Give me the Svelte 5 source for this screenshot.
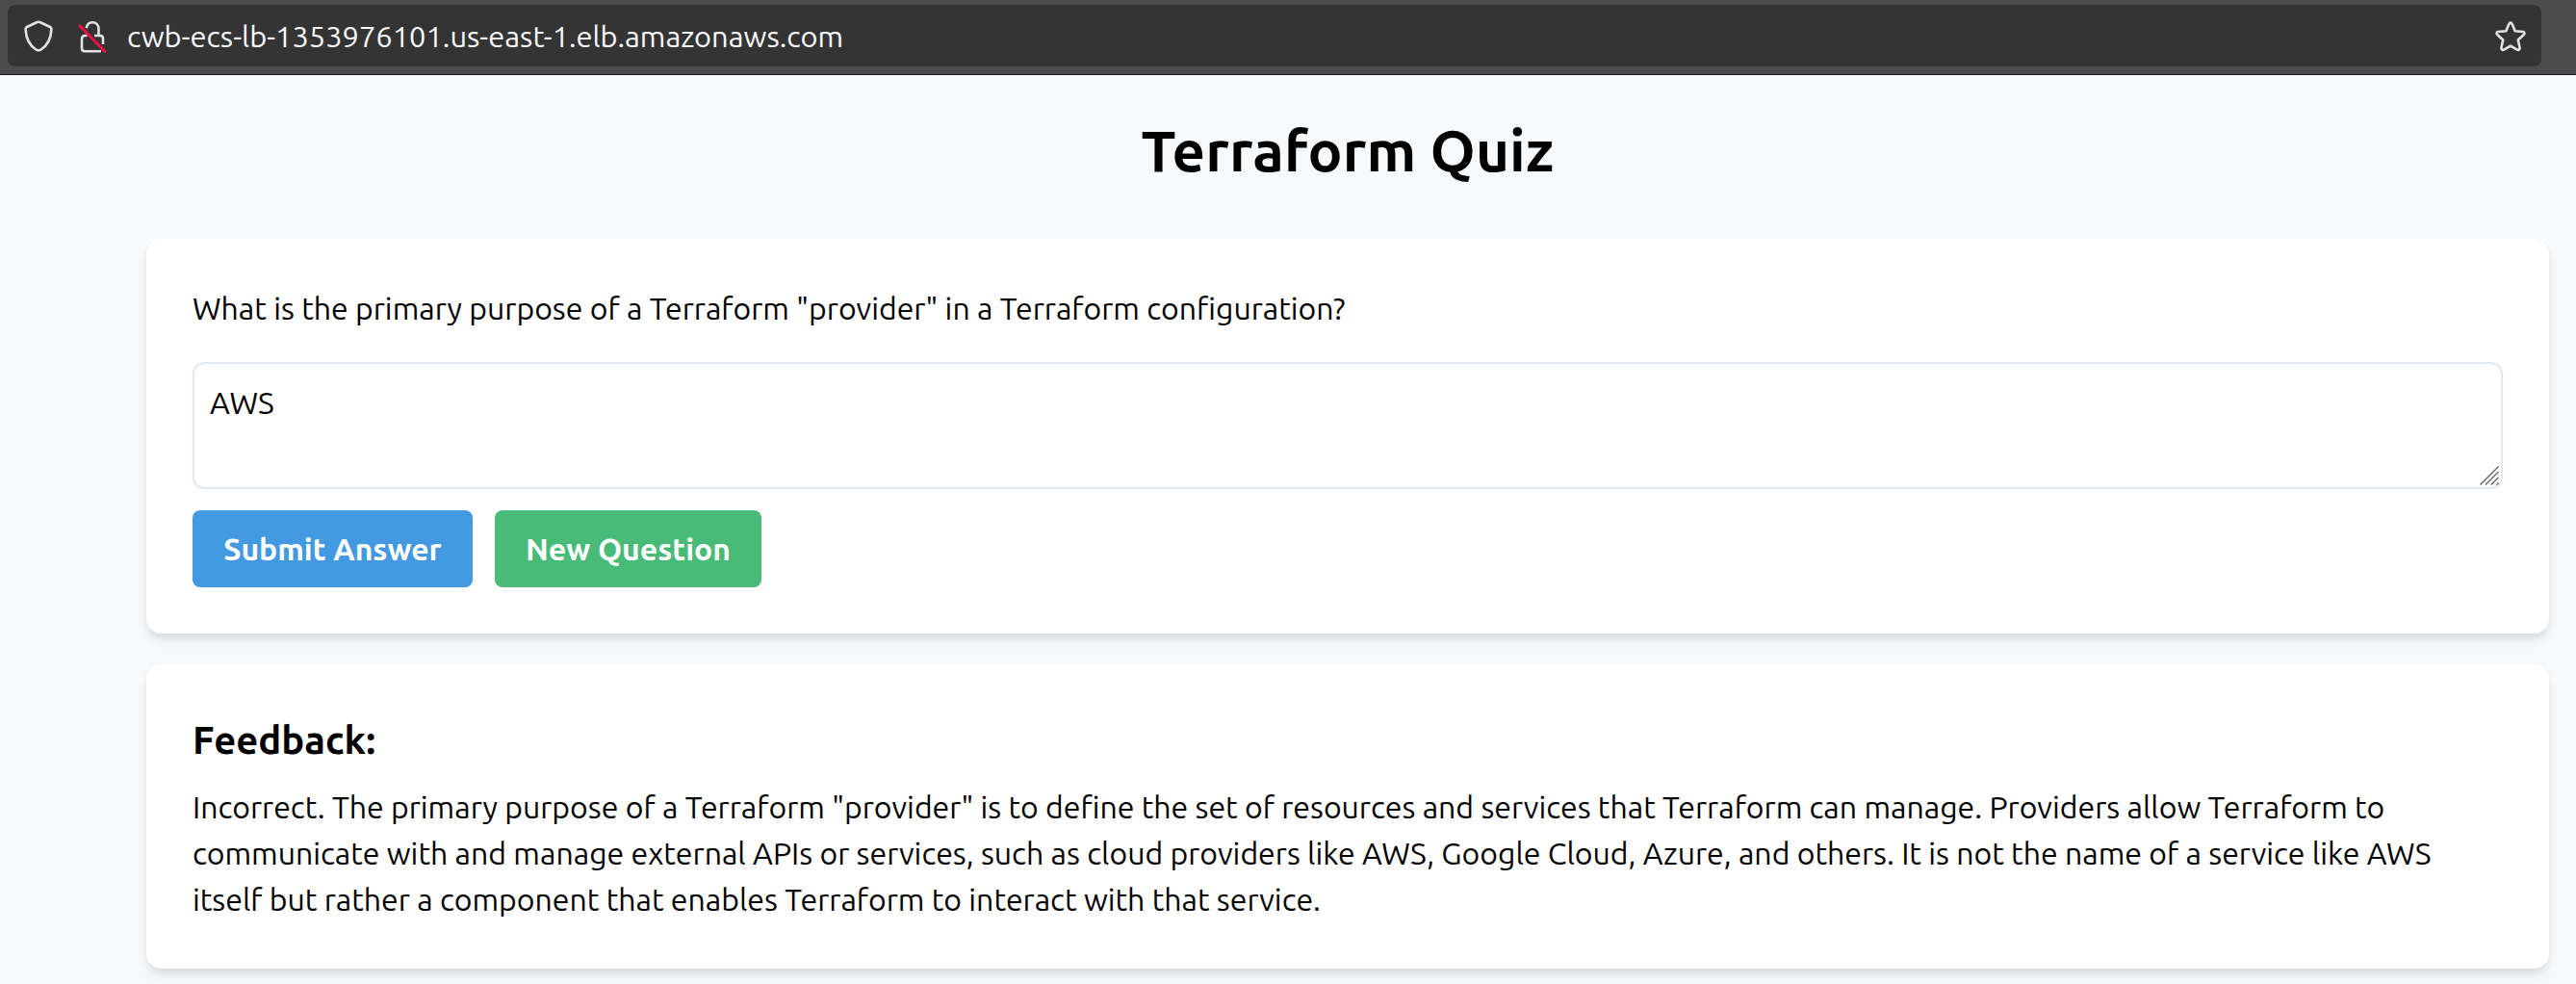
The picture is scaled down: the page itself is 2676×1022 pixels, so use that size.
<script>
  let answer = $state('AWS');
  const url = 'cwb-ecs-lb-1353976101.us-east-1.elb.amazonaws.com';
  const question = 'What is the primary purpose of a Terraform "provider" in a Terraform configuration?';
  const feedback =
    'Incorrect. The primary purpose of a Terraform "provider" is to define the set of resources and services that Terraform can manage. Providers allow Terraform to communicate with and manage external APIs or services, such as cloud providers like AWS, Google Cloud, Azure, and others. It is not the name of a service like AWS itself but rather a component that enables Terraform to interact with that service.';
</script>

<header class="toolbar">
  <div class="urlbar">
    <svg class="shield" viewBox="0 0 32 36" width="32" height="36">
      <path d="M16 3.7 Q17 3.7 18 4.3 L28 9 Q29.6 9.8 29.4 11.6 C29 21 26.4 27.2 18.6 32.5 Q16 34.3 13.4 32.5 C5.6 27.2 3 21 2.6 11.6 Q2.4 9.8 4 9 L14 4.3 Q15 3.7 16 3.7 Z" />
    </svg>
    <svg class="lock" viewBox="0 0 32 36" width="32" height="36">
      <path d="M9.7 10.2 C10.4 6 12.6 4.2 16 4.2 C20 4.2 22.5 7 22.5 11 V18" />
      <path d="M18 18 H24 Q27 18 27 21 V27" />
      <path d="M10.5 18 H8.5 Q5 18 5 21.5 V31 Q5 34.2 8.2 34.2 H25" />
      <line class="slash" x1="3" y1="8" x2="29" y2="34.4" />
    </svg>
    <span class="url">{url}</span>
    <svg class="star" viewBox="0 0 36 36" width="36" height="36">
      <path d="M16.2 6.3 Q18 3 19.8 6.3 L22.7 13.2 L31 14 Q33.6 14.8 31.8 17 L25.8 22.5 L27.6 30.8 Q27.6 33.6 24.8 32.6 L18 28.6 L11.2 32.6 Q8.4 33.6 8.4 30.8 L10.2 22.5 L4.2 17 Q2.4 14.8 5 14 L13.3 13.2 Z" />
    </svg>
  </div>
</header>

<main>
  <h1>Terraform Quiz</h1>

  <section class="card">
    <p class="question">{question}</p>
    <div class="field">
      <textarea rows="2" bind:value={answer}></textarea>
      <svg class="grip" viewBox="0 0 22 22" width="22" height="22">
        <path d="M1.5 20.5 L20.5 1.5 M7 20.5 L20.5 7 M12.7 20.5 L20.5 12.7 M18.5 20.5 L20.5 18.5" />
      </svg>
    </div>
    <div class="actions">
      <button class="submit">Submit Answer</button>
      <button class="next">New Question</button>
    </div>
  </section>

  <section class="card">
    <h2>Feedback:</h2>
    <p>{feedback}</p>
  </section>
</main>

<style>
  :global(body) {
    margin: 0;
    background: #f7fafd;
    color: #000;
    font-family: Ubuntu, 'Open Sans', 'Noto Sans', sans-serif;
    font-size: 32px;
    line-height: 48px;
    overflow: hidden;
  }

  .toolbar {
    box-sizing: border-box;
    height: 78px;
    padding: 5px 36px 8px 8px;
    background: #4b4b4b;
    border-bottom: 1px solid #1c1b22;
  }

  .urlbar {
    box-sizing: border-box;
    display: flex;
    align-items: center;
    height: 64px;
    padding: 0 14px 0 16px;
    border-radius: 8px;
    background: #343434;
    color: #fbfbfe;
  }

  svg {
    flex: none;
    fill: none;
    stroke: #e3e3e3;
    stroke-width: 2.6;
    stroke-linecap: round;
    stroke-linejoin: round;
  }

  .lock {
    margin-left: 24px;
    stroke-linecap: butt;
  }

  .slash {
    stroke: #f5103f;
    stroke-width: 2.8;
    stroke-linecap: round;
  }

  .url {
    flex: 1;
    margin-left: 20px;
    padding-top: 2px;
    font-size: 30.8px;
    white-space: nowrap;
  }

  main {
    padding: 42px 28px 0 152px;
  }

  h1 {
    margin: 0 0 56px;
    font-size: 60px;
    line-height: 72px;
    font-weight: 600;
    letter-spacing: 0.1px;
    text-align: center;
  }

  .card {
    margin-bottom: 32px;
    padding: 48px;
    border-radius: 16px;
    background: #fff;
    box-shadow:
      0 8px 12px -2px rgba(0, 0, 0, 0.1),
      0 4px 8px -2px rgba(0, 0, 0, 0.06);
  }

  p {
    margin: 0;
  }

  .question {
    margin-bottom: 32px;
  }

  .field {
    position: relative;
    height: 132px;
  }

  textarea {
    box-sizing: border-box;
    display: block;
    width: 100%;
    height: 132px;
    padding: 16px;
    border: 2px solid #e2e8f0;
    border-radius: 12px;
    background: #fff;
    color: #000;
    font: inherit;
    overflow: hidden;
    resize: none;
  }

  .grip {
    position: absolute;
    right: 3px;
    bottom: 3px;
    stroke: #6a6a6a;
    stroke-width: 1.5;
    stroke-linecap: butt;
  }

  .actions {
    display: flex;
    gap: 23px;
    margin-top: 22px;
  }

  button {
    height: 80px;
    padding: 0;
    border: 0;
    border-radius: 8px;
    color: #fff;
    font: inherit;
    font-weight: 600;
    white-space: nowrap;
  }

  .submit {
    width: 291px;
    background: #4299e1;
  }

  .next {
    width: 277px;
    background: #48bb78;
  }

  h2 {
    margin: 0 0 15px;
    padding-top: 1px;
    font-size: 40px;
    line-height: 60px;
    font-weight: 600;
  }
</style>
